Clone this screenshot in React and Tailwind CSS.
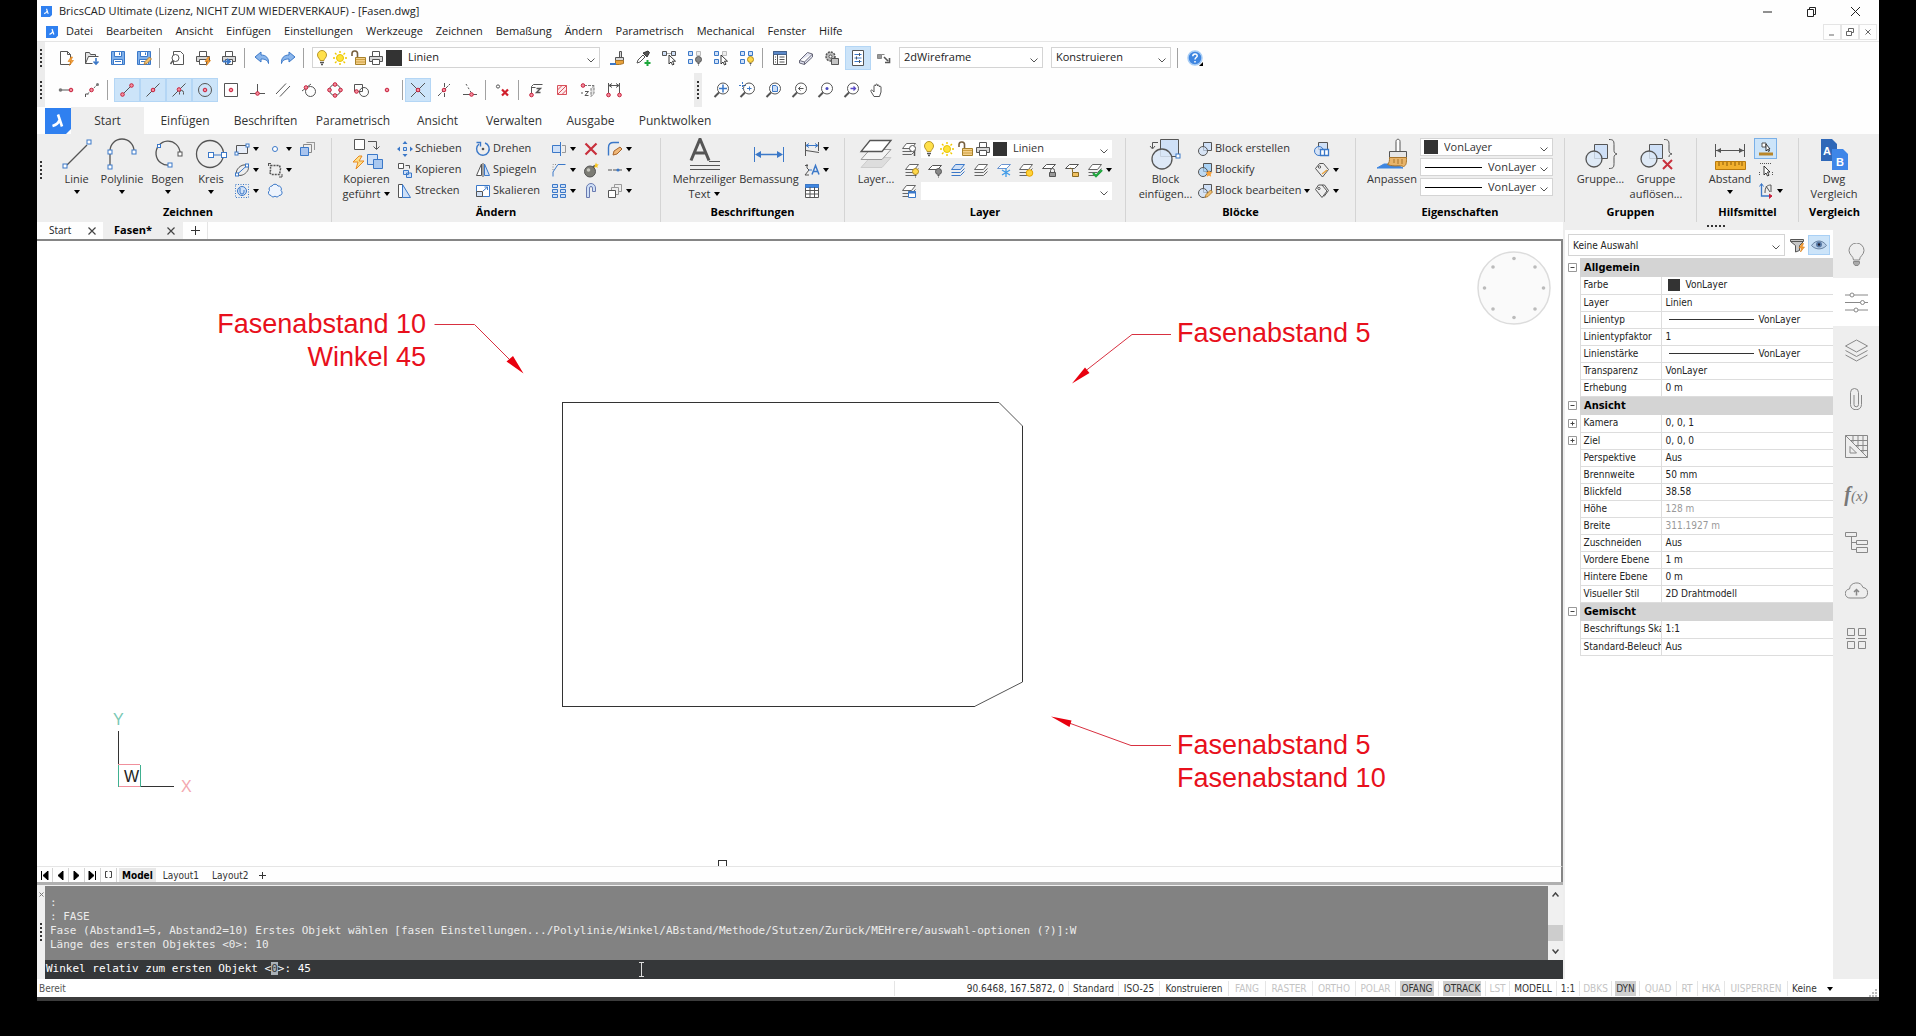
import React from "react";

const G = "#555";
const B = "#3b78c8";
const L = "#cfe0f7";
const R = "#c8203c";
const O = "#e9a23b";

const Dot = ({ x, y }) => <circle cx={x} cy={y} r="1.8" fill="#f3909f" stroke={R} />;
const Node = ({ x, y, c = B, s = 4 }) => <rect x={x - s / 2} y={y - s / 2} width={s} height={s} fill="#fff" stroke={c} />;
const Lens = ({ children }) => (
  <>
    <circle cx="10" cy="6.5" r="5.5" fill="#fff" stroke={G} />
    <path d="M6 10.500L1.500 15" stroke={G} strokeWidth="2" />
    {children}
  </>
);
const Sheet = ({ y = 2.5, f = "#fff", c = G }) => <path d={`M5.500 ${y}h9l-4 4h-9z`} fill={f} stroke={c} />;
const Stack = ({ f = "#fff", c = "#666" }) => (
  <>
    <path d="M1.500 13.500h9l4-4M1.500 10.500h9l4-4" fill="none" stroke={c} />
    <path d="M5.500 2.500h9l-4 5h-9z" fill={f} stroke={c} />
  </>
);
const Disk = () => (
  <>
    <path d="M1.500 1.500h13v13h-13z" fill="#7fb0ea" stroke={B} />
    <path d="M4.500 1.500h7v5h-7zM3.500 9.500h9v5h-9z" fill="#fff" stroke={B} />
    <path d="M9.500 2.500v2.500M5 11.500h6" stroke={B} />
  </>
);
const Pencil = () => <path d="M8 14.500l1-3 4.500-4.500 2 2-4.500 4.500z" fill="#f0c070" stroke="#a8742a" strokeWidth=".8" />;
const Flash = ({ x = 0, y = 0 }) => <path d={`M${12 + x} ${7 + y}l-3 4.500h2.500l-1 4 4-5h-2.500l1.500-3.500z`} fill="#f7a13a" stroke="#d97a10" strokeWidth=".6" />;
const Bulb = ({ x = 0, y = 0, f = "#ffe04a", c = "#b8962a" }) => (
  <g transform={`translate(${x} ${y})`}>
    <path d="M5 10.500c0-2-2.500-2.500-2.500-5.500a4.500 4.500 0 0 1 9 0c0 3-2.500 3.500-2.500 5.500z" fill={f} stroke={c} />
    <path d="M5 12.500h4M6 14.500h2" stroke={G} strokeWidth="1.400" />
  </g>
);
const Tiny = ({ f = "#ffd84a", c = "#b08a20" }) => (
  <>
    <circle cx="11.500" cy="9.500" r="3" fill={f} stroke={c} />
    <path d="M10.500 13.500h2M11 15h1" stroke={G} />
  </>
);
const Lock = ({ open }) => (
  <>
    <path d={open ? "M8.500 10V8a2 2 0 0 0-3-1.500" : "M9.500 10V8.500a2 2 0 0 1 4 0V10"} fill="none" stroke={open ? "#8a6a20" : G} />
    <path d="M8.500 10.500h6v4h-6z" fill={open ? "#f0c060" : "#999"} stroke={open ? "#8a6a20" : G} />
  </>
);
const Printer = () => (
  <>
    <path d="M4.500 6V1.500h7V6" fill="#fff" stroke={G} />
    <path d="M1.500 6.500h13v5h-13z" fill="#d8d8d8" stroke={G} />
    <path d="M4.500 9.500h7v5h-7z" fill="#fff" stroke={G} />
  </>
);
const Squares = ({ dim }) => (
  <>
    <path d="M1.500 1.500h4v4h-4zM1.500 9.500h4v4h-4z" fill={L} stroke={B} />
    <path d="M9.500 1.500h4v4h-4z" fill={dim ? "#eee" : L} stroke={dim ? "#bbb" : B} />
  </>
);
const Cursor = () => <path d="M8 5v9l2-2 1.500 3 1.500-.8-1.500-3h3z" fill="#fff" stroke="#222" strokeWidth=".9" />;
const CircSq = ({ f = L }) => (
  <>
    <path d="M6.500 1.500h8v8h-8z" fill={f} stroke={G} />
    <circle cx="6" cy="10" r="4.500" fill={f} fillOpacity=".7" stroke={G} />
  </>
);

const ICONS = {
  neu: <><path d="M2.500 1.500h7l3 3v10h-10z" fill="#fff" stroke={G} /><path d="M9.500 1.500v3h3" fill="none" stroke={G} /><Flash x={1} /></>,
  open: <><path d="M1.500 13.500v-11h4l1 2h5v2h-7l-3 7h7" fill="#e4e4e4" stroke={G} /><path d="M4.500 6.500h10" stroke={G} /><path d="M12 8v6M9.500 11.500L12 14l2.500-2.500" fill="none" stroke={B} strokeWidth="1.600" /></>,
  save: <Disk />,
  saveas: <><Disk /><Pencil /></>,
  preview: <><path d="M4.500 1.500h7l3 3v10h-10z" fill="#fff" stroke={G} /><circle cx="6.500" cy="8" r="3.500" fill="#fff" stroke={G} /><path d="M4 10.500L1.500 14" stroke={G} strokeWidth="1.500" /></>,
  printx: <><Printer /><Flash x={1} /></>,
  publish: <><Printer /><path d="M2 11.500h6M6 9l3 2.500-3 2.500" fill="none" stroke={B} strokeWidth="1.800" /></>,
  undo: <path d="M1 7l6-5v3c5 0 8 3 7.500 8.500-1-3.500-3.500-4.500-7.500-4.500v3z" fill="#8ab6ec" stroke={B} />,
  redo: <path d="M15 7l-6-5v3c-5 0-8 3-7.500 8.500 1-3.500 3.500-4.500 7.500-4.500v3z" fill="#8ab6ec" stroke={B} />,
  bulb: <Bulb x={1} />,
  sun: <><circle cx="8" cy="8" r="3.500" fill="#ffe23a" stroke="#e8c400" /><path d="M8 1v2M8 13v2M1 8h2M13 8h2M3 3l1.500 1.500M11.500 11.500L13 13M3 13l1.500-1.500M11.500 4.500L13 3" stroke="#f0c800" strokeWidth="1.400" /></>,
  unlock: <><path d="M7.500 8V4a2.700 2.700 0 0 0-5.500-.5v2.500" fill="none" stroke="#776040" strokeWidth="1.600" /><path d="M5.500 7.500h10v7h-10z" fill="#f3cf8a" stroke="#a8822a" /><path d="M6 9.500h9M6 12h9" stroke="#cfa040" /></>,
  printer: <Printer />,
  brush: <><path d="M10.500 1.500h2v6h-2zM6.500 7.500h8v3h-8z" fill="#d8d8d8" stroke={G} /><path d="M6.500 10.500h8v3l-4 1h-4z" fill={O} stroke="#a8742a" /><path d="M1 14h6" stroke={B} strokeWidth="2" /></>,
  picker: <><path d="M2 13l1-3 5-5 2 2-5 5z" fill="#fff" stroke={G} /><path d="M8 3l4 4 2.500-4.500-1.500-1.500z" fill="#555" stroke="#333" /><path d="M12.500 10v6M9.500 13h6" stroke="#1ea83c" strokeWidth="2" /></>,
  selhide: <><path d="M1.500 1.500h4v4h-4zM10.500 1.500h4v4h-4z" fill={L} stroke={G} /><path d="M5.500 3.500h5" stroke={G} strokeDasharray="1 1" /><Cursor /></>,
  selbulb: <><Squares dim /><Tiny f="#888" c={G} /></>,
  selcur: <><Squares dim /><Cursor /></>,
  sellit: <><Squares /><Tiny /></>,
  explorer: <><path d="M1.500 1.500h13v13h-13z" fill="#fff" stroke={G} /><path d="M1.500 1.500h13v3h-13z" fill="#5a88c8" stroke="#44628c" /><path d="M5.500 4.500v10M7.500 7h5M7.500 9.500h5M7.500 12h5M3 7h1M3 9.500h1M3 12h1" stroke={G} /></>,
  eraser: <path d="M1.500 10.500l8-8 5 1.500v3l-8 7.500-5-1.500zM1.500 10.500l5 1.500 8-8M6.500 12v2.500" fill="#e0e2f0" stroke="#667" />,
  gear: <><circle cx="6.500" cy="6.500" r="4.500" fill="#bbb" stroke={G} strokeWidth="1.500" strokeDasharray="2 1" /><circle cx="6.500" cy="6.500" r="1.500" fill="#fff" stroke={G} /><path d="M7.500 8.500h7v6h-7z" fill="#c4c4c4" stroke={G} /></>,
  settings: <><path d="M2.500.5h11v15h-11z" fill="#fff" stroke={G} /><path d="M4.500 4.500h7M4.500 8h7M4.500 11.500h7" stroke={B} /><path d="M9.500 3v3M6.500 6.500v3M9.500 10v3" stroke={G} /></>,
  swap: <><path d="M1.500 4.500h4v4h-4zM5.500 4.500h3" fill="#999" stroke="#888" /><path d="M8 7l4 4M13.500 8v4.500h-4.500" fill="none" stroke={G} strokeWidth="1.600" /></>,
  help: <><circle cx="8" cy="8" r="7" fill="#3f86e0" stroke="#a8cdf5" strokeWidth="1.500" /><path d="M5.800 6.200c0-3 4.400-3 4.400-.3 0 1.600-2.200 1.600-2.200 3.600M8 11v1.600" fill="none" stroke="#fff" strokeWidth="1.500" /><path d="M16 12v4h-4z" fill="#000" /></>,
  o1: <><path d="M4 8h8" stroke={G} /><circle cx="2.500" cy="8" r="1.800" fill="#777" /><Dot x={13} y={8} /></>,
  o2: <><path d="M3.500 12L13 3" stroke={G} strokeDasharray="2 1" /><path d="M1.500 15v-3h3" fill="none" stroke={G} /><circle cx="13.500" cy="2.500" r="1.500" fill="#777" /><Dot x={7.500} y={8} /></>,
  o3: <><path d="M3 13l10-10" stroke={G} /><Dot x={3.500} y={12.500} /><Dot x={12.500} y={3.500} /></>,
  o4: <><path d="M1.500 14.500l13-13" stroke={G} /><Dot x={8} y={8} /></>,
  o5: <><path d="M1.500 14.500l13-13M8.500 12.500v-2a2 2 0 0 1 4 0v2" fill="none" stroke={G} /><Dot x={8} y={7.500} /></>,
  o6: <><circle cx="8" cy="8" r="6.500" fill="none" stroke={G} /><Dot x={8} y={8} /></>,
  o7: <><path d="M1.500 1.500h13v13h-13z" fill="none" stroke={G} /><Dot x={8} y={8} /></>,
  o8: <><path d="M8.500 2v9M1 11.500h15" stroke={G} /><Dot x={8.500} y={11.500} /></>,
  o9: <path d="M1 12L11 1.500M5 14.500L15 4" stroke={G} />,
  o10: <><circle cx="9.500" cy="9.500" r="5" fill="none" stroke={G} /><path d="M1 9l9-7" stroke={G} /><Dot x={5} y={5.500} /></>,
  o11: <><circle cx="8" cy="8" r="5.500" fill="none" stroke={G} /><Dot x={8} y={2.500} /><Dot x={8} y={13.500} /><Dot x={2.500} y={8} /><Dot x={13.500} y={8} /></>,
  o12: <><path d="M1.500 2.500h8v7h-8z" fill="none" stroke={G} /><circle cx="11" cy="10" r="4.500" fill="none" stroke={G} /><Dot x={3.500} y={9.500} /></>,
  o13: <Dot x={8} y={8} />,
  o14: <><path d="M1 1l14 14M15 1L1 15" stroke={G} /><Dot x={8} y={8} /></>,
  o15: <><path d="M2 14L14 2M8.500 1v14" stroke={G} strokeDasharray="4 1" /><Dot x={8} y={8} /></>,
  o16: <><path d="M1 12.500h14" stroke={G} /><path d="M4 2l6 10" stroke={G} strokeDasharray="2 2" /><Dot x={9.500} y={12.500} /></>,
  o17: <><circle cx="3" cy="4.500" r="1.600" fill="none" stroke={G} /><path d="M7 7.500l6 6M13 7.500l-6 6" stroke="#d0202c" strokeWidth="2.200" /></>,
  o18: <><path d="M3.500 12V4.500l2-2h9M3.500 5.500h4" fill="none" stroke={G} /><path d="M8.500 6.500h4l-4 4h4" fill="none" stroke={G} strokeWidth="1.400" /><Dot x={3.500} y={13} /></>,
  o19: <path d="M3.500 3.500h9v9h-9zM3.500 8l4.500-4.500M3.500 12.500l9-9M8 12.500L12.500 8" fill="#fdeaec" stroke="#d8505a" />,
  o20: <><path d="M4 3.500h10v8l-3 3v-8l3-3" fill="#e4e4e4" stroke="#777" strokeDasharray="3 1" /><path d="M1 11h2M5 9.500h3.500l-3.500 4h3.500" fill="none" stroke={G} /><Dot x={3} y={3.500} /></>,
  o21: <><path d="M2.500 1v10M13.500 1v10M3 3.500h10" stroke={G} /><path d="M6 1.500l-3 2 3 2M10 1.500l3 2-3 2" fill="none" stroke={G} /><Dot x={2.500} y={13} /><Dot x={13.500} y={13} /></>,
  z1: <Lens><path d="M10 2.500v8M6 6.500h8" stroke={B} strokeWidth="1.500" /></Lens>,
  z2: <Lens><path d="M0 3.500h7M3.500 0v7" stroke={B} strokeDasharray="2 1" /><path d="M8 6.500h4.500M10.500 4.500v4" stroke={B} /></Lens>,
  z3: <Lens><path d="M7.500 3.500h3.500l1.500 1.500v4.500h-5z" fill={L} stroke={B} /></Lens>,
  z4: <Lens><path d="M7.500 6.500h5M9.500 4.500l-2 2 2 2" fill="none" stroke={G} /></Lens>,
  z5: <Lens><circle cx="10" cy="6.500" r="1.500" fill="#4a4ac0" /></Lens>,
  z6: <Lens><path d="M7.500 6.500h5M10.500 4.500l2 2-2 2" fill="none" stroke="#5a4ac8" strokeWidth="1.300" /></Lens>,
  z7: <path d="M5 14.500L2 9.500c-.8-1.500.8-2 1.800-.8L5 10V4c0-1.200 1.600-1.200 1.700 0V3c0-1.200 1.800-1.200 1.800 0v1c0-1.200 1.800-1.200 1.800 0v1c0-1 1.700-1 1.700 0v5l-1.500 4.500z" fill="#fff" stroke={G} />,
  rect: <><path d="M2.500 4.500h11v8h-11z" fill="#e8eef8" stroke={G} /><Node x={2.500} y={12.500} s={3} /><Node x={13.500} y={4.500} s={3} /></>,
  ell: <><path d="M3 12.500c-3-4 5-12 10-9s-4 13-10 9z" fill="none" stroke={G} /><path d="M3 12.500l10-9" stroke={B} /><Node x={3} y={12.500} s={3} /><Node x={13} y={3.500} s={3} /></>,
  hatch: <><path d="M1.500 1.500h13v13h-13z" fill="none" stroke={B} strokeDasharray="1 1.500" /><circle cx="8" cy="8" r="4.500" fill={L} stroke={B} /><path d="M6 5v4a2 2 0 0 0 4 0V7" fill="none" stroke={B} /></>,
  pt: <circle cx="8" cy="8" r="2.500" fill="#fff" stroke={B} />,
  bound: <><path d="M3.500 3.500h9l1 3-1 6h-8l-2-2 1-2z" fill="none" stroke={G} strokeDasharray="2 1" strokeWidth="1.500" /><path d="M1 1.500h3M1.500 1v3M15 12v3h-3" fill="none" stroke={G} /></>,
  cloud: <path d="M4 12.500A2.800 2.800 0 0 1 2.500 7.500A3 3 0 0 1 5 3A3.400 3.400 0 0 1 11 3A3 3 0 0 1 14 7.500A2.800 2.800 0 0 1 12 12.500A2.300 2.300 0 0 1 8 13A2.300 2.300 0 0 1 4 12.500z" fill="#eef4fd" stroke={B} />,
  copy3: <><path d="M7.500 1.500h8M15.500 1v8" stroke="#999" /><path d="M4.500 3.500h8v8h-8z" fill="#eee" stroke="#888" /><path d="M1.500 6.500h8v8h-8z" fill="#a9c4ee" stroke={B} /></>,
  move: <><path d="M6.500 6.500h3v3h-3z" fill={L} stroke={B} /><path d="M8 0l2.500 3h-5zM8 16l2.500-3h-5zM0 8l3-2.500v5zM16 8l-3-2.500v5z" fill={B} /></>,
  kop: <><path d="M1.500 1.500h5v5h-5z" fill="#fff" stroke={G} /><path d="M8.500 3.500h4v3" fill="none" stroke={G} /><path d="M6.500 8.500h5v4h-5zM9.500 11h5v4.500h-5z" fill={L} stroke={B} /></>,
  strecken: <><path d="M1.500 14.500v-13h4v13z" fill="#fff" stroke={G} /><path d="M5.500 1.500l8 13h-8z" fill={L} stroke={B} /></>,
  drehen: <><path d="M4 3a6.300 6.300 0 1 0 6-1" fill="none" stroke={B} strokeWidth="1.400" /><path d="M1.500 1.500h4v4" fill="none" stroke={B} strokeWidth="1.400" /><circle cx="8" cy="8" r="1.300" fill={G} /></>,
  spiegeln: <><path d="M6.500 2v11.500h-5zM8 1v14" fill="#fff" stroke={G} /><path d="M9.500 2v11.500h5z" fill={L} stroke={B} /></>,
  skal: <><path d="M1.500 2.500h13v11h-13z" fill="#fff" stroke={B} /><path d="M1.500 8.500h6v5h-6z" fill={L} stroke={G} /><path d="M8 8l4.500-4M9.500 4h3v3" fill="none" stroke={B} /></>,
  trim: <><path d="M1.500 4.500h8v7h-8z" fill={L} stroke={B} /><path d="M9.500 1v14" stroke={B} /><path d="M11 4.500h3.500v7H11" fill="none" stroke="#999" /></>,
  fase: <><path d="M2 14.500V10l5-7.500h7.500" fill="none" stroke={B} /><path d="M2 8V2.500h4" fill="none" stroke="#888" strokeDasharray="1 1.500" /></>,
  array: <path d="M1.500 1.500h5v3h-5zM9.500 1.500h5v3h-5zM1.500 6.500h5v3h-5zM9.500 6.500h5v3h-5zM1.500 11.500h5v3h-5zM9.500 11.500h5v3h-5z" fill={L} stroke={B} />,
  del: <path d="M2.500 2.500l11 11M13.500 2.500l-11 11" stroke="#c8303c" strokeWidth="2.200" />,
  bomb: <><circle cx="7" cy="9.500" r="5.500" fill="#7b7b74" stroke={G} /><circle cx="5.500" cy="8" r="1.800" fill="#c8c8c0" /><path d="M10 5.500l2-2" stroke={G} strokeWidth="2" /><path d="M13 .5l.8 1.700 2 .3-1.500 1.400.4 2L13 5l-1.800 1 .4-2z" fill="#f7c51e" /></>,
  clip: <path d="M3.500 14.500V5a4.500 4.500 0 0 1 9 0v3.500h-3V5a1.500 1.500 0 0 0-3 0v9.500z" fill={L} stroke="#6a7ab0" />,
  edit: <><path d="M1.500 14.500v-8c0-3 2-5 5-5h5.500" fill="none" stroke={B} strokeWidth="1.400" /><path d="M6 14l1-4 6-4 2 2-5 5z" fill="#f0b878" stroke="#a8642a" /></>,
  join: <><path d="M1 8h4M6 8h4" stroke={G} /><path d="M10 8h5" stroke={G} /><circle cx="11" cy="8" r="1.600" fill={B} /></>,
  order: <><path d="M7.500 1.500h7v7h-7z" fill="#eee" stroke="#999" /><path d="M4.500 4.500h7v7h-7z" fill="#eee" stroke="#999" /><path d="M1.500 7.500h7v7h-7z" fill="#fff" stroke={G} /></>,
  dim1: <><path d="M1.500 1v14M14.500 1v9" stroke={G} /><path d="M2 4.500h12M5 2.500l-3 2 3 2M11 2.500l3 2-3 2" fill="none" stroke={B} /><path d="M2 9.500l13 2" stroke={G} /></>,
  dim2: <><path d="M1 3.500h3M3 2v4l2 2-4 5M1 13h4" fill="none" stroke={G} /><path d="M5 8h3" stroke={B} /><path d="M8 12.500L11.500 3.500 15 12.500M9.500 9.500h4.500" fill="none" stroke={B} strokeWidth="1.500" /></>,
  table: <><path d="M1.500 1.500h13v13h-13z" fill="#fff" stroke={G} /><path d="M1.500 1.500h13v3h-13z" fill="#3f86e0" stroke={B} /><path d="M1.500 7.500h13M1.500 11h13M6 4v10.500M10.500 4v10.500" stroke={G} /></>,
  lay0: <><Stack /><circle cx="11.500" cy="7.500" r="3" fill="#fff" stroke={G} /><path d="M13.500 10v5" stroke={G} strokeWidth="1.500" /></>,
  lay1: <><Stack /><Tiny /></>,
  lay2: <><Sheet y={3.500} /><Tiny f="#888" c={G} /></>,
  lay3: <Stack f={L} c={B} />,
  lay4: <Stack />,
  lay5: <><Sheet y={2.500} c="#6a94d0" f="#fff" /><path d="M10 6v9M6 8l8 5M14 8l-8 5" stroke="#3f9be8" strokeWidth="1.300" /></>,
  lay6: <><Stack /><circle cx="11.500" cy="11" r="3.300" fill="#ffd23a" stroke="#e5a400" /></>,
  lay7: <><Sheet y={2.500} /><Lock /></>,
  lay8: <><Sheet y={2.500} /><Lock open /></>,
  lay9: <><Stack /><path d="M6 11l3 3 6-6" fill="none" stroke="#22a840" strokeWidth="2.400" /></>,
  lay10: <><Stack /><path d="M7.500 8.500h7v6h-7z" fill="#fff" stroke={B} /><path d="M7 9.500h8" stroke={B} strokeWidth="2" /></>,
  blk1: <CircSq />,
  blk2: <><CircSq f="#a9d2f5" /><path d="M12 8l1 2 2.500.4-1.800 1.700.4 2.600L12 13.500l-2.200 1.200.4-2.600L8.500 10.400 11 10z" fill="#f7a13a" /></>,
  blk3: <><CircSq /><Pencil /></>,
  blk4: <><path d="M4.500 1.500h9v7h-9z" fill={L} stroke={G} /><circle cx="5" cy="10" r="4.500" fill={L} fillOpacity=".8" stroke={B} /><path d="M6.500 8.500h8v6h-8zM10.500 8.500v6" fill="#fff" stroke={B} strokeWidth="1.300" /></>,
  tag: <><path d="M1.500 6.500l4-5h4l5 6-6 7.500z" fill="#eee" stroke={G} /><circle cx="5.500" cy="5" r="1.200" fill="#fff" stroke={G} /><path d="M8 12l5-4" stroke={O} strokeWidth="1.500" /></>,
  tag2: <><path d="M1.500 6.500l3-4.500h3.500l5 6-5 6.500z" fill="#eee" stroke={G} /><path d="M8 2h2.500l4 5.500-4.500 6" fill="none" stroke={G} /><circle cx="5" cy="5.500" r="1.100" fill="#fff" stroke={G} /></>,
  hm1: <><path d="M1 13h14" stroke="#b8862a" strokeWidth="3" /><path d="M4 2h4v4h-4z" fill="#fff" stroke={G} /><path d="M8 3v7l1.500-1.500 1 2 1-.5-1-2H12z" fill="#fff" stroke="#222" strokeWidth=".9" /></>,
  hm2: <><path d="M2 1.500h12M1.500 10v4M14.500 10v4" stroke={G} strokeDasharray="1 1" /><path d="M6 4v9l2-2 1.500 3 1.500-.8L9.500 10H12z" fill="#fff" stroke="#222" strokeWidth=".9" /></>,
  hm3: <><path d="M3.500 1v12h9" fill="none" stroke={B} strokeWidth="1.300" /><path d="M1.500 3.500l2-3 2 3" fill="none" stroke={B} /><path d="M7 10c0-6 2-8 6-8v7M8 3l4 6" fill="none" stroke={G} /><path d="M11 11l3 2-3 2.500" fill={R} stroke={R} /></>,
  filter: <><path d="M1.500 2.500h13v2l-4 4v5l-4 1.500V8.500l-5-4z" fill="#c8c8c8" stroke={G} /><path d="M2 4.500h12" stroke={G} /><Flash x={1} y={-.5} /></>,
  eye: <><path d="M.5 8.500c4-6 11-6 15 0-4 4.500-11 4.500-15 0z" fill="#b8cfe8" stroke="#6a84a4" /><circle cx="8" cy="7.500" r="3" fill="#5a7ca8" /><circle cx="8" cy="7.500" r="1.200" fill="#223" /></>,
};

const BIG = {
  linie: <><path d="M6 27L26 7" stroke={G} strokeWidth="1.300" /><Node x={4} y={28} /><Node x={28} y={4} /></>,
  poly: <><path d="M4 28V13a12 12 0 0 1 24 0" fill="none" stroke={G} strokeWidth="1.300" /><Node x={4} y={29} /><Node x={4} y={14} /><Node x={28} y={14} /></>,
  bogen: <><path d="M28 15A12 12 0 1 0 18 27" fill="none" stroke={G} strokeWidth="1.300" /><Node x={7} y={8} s={3} /><Node x={28} y={16} c={G} /><Node x={18} y={27} /></>,
  kreis: <><circle cx="15" cy="16" r="13.500" fill="none" stroke={G} strokeWidth="1.300" /><path d="M16 17h12" stroke={B} /><Node x={16} y={17} s={5} /><Node x={29} y={17} s={5} /></>,
  kopg: <><path d="M3.500 1.500h10v10h-10z" fill="#fff" stroke={G} /><path d="M17 3.500h8.500V11M22.500 8.500l3 3 3-3" fill="none" stroke={G} /><path d="M8 18l-6 6h5l-2 7 8-8H8l3-5z" fill="#fde08a" stroke="#e98a20" /><path d="M16.500 16.500h10v10h-10z" fill={L} stroke={B} /><path d="M22.500 21.500h9v9h-9z" fill="#a9c8f0" stroke={B} /></>,
  dim: <><path d="M1.500 9v15M30.500 9v15" stroke={B} /><path d="M4 16.500h24" stroke={B} strokeWidth="1.500" /><path d="M2 16.500l6-3.500v7zM30 16.500l-6-3.500v7z" fill={B} /></>,
  layer: <><path d="M10 19.500h21l-9 10H1z" fill="#ddd" stroke="#ccc" /><path d="M10 11.500h21l-9 10H1z" fill="#f4f4f4" stroke="#999" /><path d="M10 2.500h21l-9 11H1z" fill="#fff" stroke={G} strokeWidth="1.300" /></>,
  block: <><path d="M10.500 1.500h18v17h-18z" fill="#cfe0f7" stroke={G} /><circle cx="12" cy="21" r="10" fill="#dbe8f8" fillOpacity=".85" stroke={G} strokeWidth="1.300" /><path d="M2.500 10V4.500H8M0 8l2.500 3L5 8" fill="none" stroke={G} /><Node x={28} y={18} /></>,
  pinsel: <><path d="M20 13V3.500c0-3 4-3 4 0V13" fill="#fff" stroke={G} /><path d="M13.500 13.500h17v6h-17z" fill="#e6e6e6" stroke={G} /><path d="M1 30h26l-8-4H8z" fill="#3f86e0" stroke="#3f86e0" /><path d="M13.500 19.500h17c0 5 0 8-3 9-4-2-8 1-16-2 2-2 2-4 2-7z" fill="#e8b46a" stroke="#a8742a" /><path d="M18 21v4M22 21v5M26 21v5" stroke="#a8742a" /></>,
  gruppe: <><path d="M9.500 6.500h13v14h-13z" fill="#cfe0f7" stroke={G} /><circle cx="9" cy="21" r="8" fill="#dbe8f8" fillOpacity=".8" stroke={G} strokeWidth="1.300" /><path d="M24 1.500c4 0 5 1 5 5v6c0 2 1 3 3 3.500-2 .5-3 1.500-3 3.500v6c0 4-1 5-5 5" fill="none" stroke={G} /></>,
  gruppex: <><path d="M9.500 6.500h13v14h-13z" fill="#cfe0f7" stroke={G} /><circle cx="9" cy="21" r="8" fill="#dbe8f8" fillOpacity=".8" stroke={G} strokeWidth="1.300" /><path d="M24 1.500c4 0 5 1 5 5v6c0 2 1 3 3 3.500-2 0-3 1-3 3" fill="none" stroke={G} /><path d="M23 22l9 9M32 22l-9 9" stroke="#c8303c" strokeWidth="2" /></>,
  abstand: <><path d="M1.500 6v13M30.500 6v13M2 12.500h28" stroke={G} /><path d="M2 12.500l5-2.500v5zM30 12.500l-5-2.500v5z" fill={G} /><path d="M1.500 23.500h30v8h-30z" fill="#f2b02e" stroke="#b87a10" /><path d="M5 24v4M9 24v3M13 24v4M17 24v3M21 24v4M25 24v3M28 24v4" stroke="#8a5a08" /></>,
};

const Ic = ({ n, s = "size-4" }) => <svg viewBox="0 0 16 16" fill="none" className={`${s} shrink-0`} aria-hidden="true">{ICONS[n]}</svg>;
const Big = ({ n }) => <svg viewBox="0 0 32 32" fill="none" className="size-8 shrink-0 overflow-visible" aria-hidden="true">{BIG[n]}</svg>;
const Tri = ({ className = "" }) => <svg viewBox="0 0 6 4" className={`h-1 w-1.5 shrink-0 ${className}`} aria-hidden="true"><path d="M0 0h6L3 4z" fill="#000" /></svg>;
const Chevron = () => <svg viewBox="0 0 8 5" className="pointer-events-none absolute right-1 top-1/2 h-[5px] w-2" aria-hidden="true"><path d="M.5.5L4 4 7.500.5" fill="none" stroke="#555" /></svg>;
const Logo = ({ className }) => (
  <svg viewBox="0 0 26 26" className={`shrink-0 ${className}`} aria-hidden="true">
    <path d="M0 0h26v21l-5 5H0z" fill="#2f80f0" />
    <path d="M13 6.500l4 12M14.500 12c-1 3-3.500 5-7 6" fill="none" stroke="#fff" strokeWidth="2.600" />
  </svg>
);
const Dots = ({ vertical, className = "" }) => (
  <svg viewBox={vertical ? "0 0 2 18" : "0 0 18 2"} className={`${vertical ? "h-[18px] w-0.5" : "h-0.5 w-[18px]"} shrink-0 ${className}`} aria-hidden="true">
    <path d={vertical ? "M1 0v18" : "M0 1h18"} stroke="#333" strokeWidth="2" strokeDasharray="2 2" />
  </svg>
);
const Divider = ({ className = "mx-1" }) => <span className={`h-5 w-px bg-neutral-400 ${className}`} />;

const ToolButton = ({ n, label, on }) => (
  <button aria-label={label} aria-pressed={on} className={`flex h-6 w-[26px] shrink-0 items-center justify-center ${on ? "bg-[#cce4f9] outline outline-1 -outline-offset-1 outline-[#b4d6f5]" : ""}`}>
    <Ic n={n} />
  </button>
);

const Combo = ({ label, value, options = [], className = "", children }) => (
  <div className={`relative flex items-center gap-0.5 border border-neutral-300 bg-white ${className}`}>
    {children}
    <select aria-label={label} defaultValue={value} className="h-full min-w-0 flex-1 appearance-none bg-transparent pr-3 pl-1 outline-none">
      {[value, ...options].map((o) => <option key={o}>{o}</option>)}
    </select>
    <Chevron />
  </div>
);

const MENU = ["Datei", "Bearbeiten", "Ansicht", "Einfügen", "Einstellungen", "Werkzeuge", "Zeichnen", "Bemaßung", "Ändern", "Parametrisch", "Mechanical", "Fenster", "Hilfe"];

function TitleBar() {
  return (
    <header className="flex h-[22px] items-center pl-1">
      <Logo className="size-[11px]" />
      <h1 className="ml-[7px] flex-1 text-[11px]">BricsCAD Ultimate (Lizenz, NICHT ZUM WIEDERVERKAUF) - [Fasen.dwg]</h1>
      <div className="flex pr-0.5">
        {[["Minimieren", "M1 6h9"], ["Wiederherstellen", "M1.500 3.500h6v7h-6zM3.500 3.500v-2h6v7h-2"], ["Schließen", "M1 1l9 9M10 1l-9 9"]].map(([l, d]) => (
          <button key={l} aria-label={l} className="flex h-5 w-11 items-center justify-center">
            <svg viewBox="0 0 11 11" className="size-[11px]"><path d={d} fill="none" stroke="#222" /></svg>
          </button>
        ))}
      </div>
    </header>
  );
}

function MenuBar() {
  return (
    <nav className="flex h-5 items-center border-b border-neutral-200 pl-[9px] text-[11px]">
      <Logo className="size-3" />
      <div className="ml-2 flex flex-1 gap-[13px]">
        {MENU.map((m) => <button key={m}>{m}</button>)}
      </div>
      <div className="flex pr-0.5">
        {[["Dokument minimieren", "M1 7h5"], ["Dokument wiederherstellen", "M.5 3.500h5v4h-5zM2.500 3v-2.500h5v4h-2"], ["Dokument schließen", "M1.500 1.500l5 5M6.500 1.500l-5 5"]].map(([l, d]) => (
          <button key={l} aria-label={l} className="flex h-4 w-[18px] items-center justify-center border border-neutral-200">
            <svg viewBox="0 0 8 8" className="size-2"><path d={d} fill="none" stroke="#666" /></svg>
          </button>
        ))}
      </div>
    </nav>
  );
}

const Grip = ({ className = "" }) => <span className={`flex w-2 shrink-0 items-center justify-center self-stretch bg-[#ececec] ${className}`}><Dots vertical /></span>;

function Toolbars() {
  return (
    <>
      <div className="flex h-[31px] items-center text-[11px]">
        <Grip />
        <div className="ml-2 flex items-center">
          <ToolButton n="neu" label="Neu" /><ToolButton n="open" label="Öffnen" /><ToolButton n="save" label="Speichern" /><ToolButton n="saveas" label="Speichern unter" />
          <Divider className="mr-1 ml-0.5" />
          <ToolButton n="preview" label="Druckvorschau" /><ToolButton n="printx" label="Drucken" /><ToolButton n="publish" label="Publizieren" />
          <Divider className="mr-1 ml-0.5" />
          <ToolButton n="undo" label="Zurück" /><ToolButton n="redo" label="Wiederherstellen" />
          <Divider className="mr-2 ml-0.5" />
          <Combo label="Aktueller Layer" value="Linien" className="h-[21px] w-[288px] pl-px">
            <Ic n="bulb" /><Ic n="sun" /><Ic n="unlock" /><Ic n="printer" />
            <span className="size-4 bg-[#333]" />
          </Combo>
          <span className="w-1" />
          <ToolButton n="brush" label="Eigenschaften anpassen" /><ToolButton n="picker" label="Pipette" /><ToolButton n="selhide" label="Auswählen" /><ToolButton n="selbulb" label="Ausblenden" /><ToolButton n="selcur" label="Isolieren" /><ToolButton n="sellit" label="Einblenden" />
          <Divider className="mr-1 ml-0.5" />
          <ToolButton n="explorer" label="Zeichnungs-Explorer" /><ToolButton n="eraser" label="Bereinigen" /><ToolButton n="gear" label="Anpassen" /><ToolButton n="settings" label="Einstellungen" on /><ToolButton n="swap" label="Umschalten" />
          <Combo label="Visueller Stil" value="2dWireframe" className="h-[21px] w-36 ml-0.5" />
          <Combo label="Arbeitsbereich" value="Konstruieren" className="ml-2 h-[21px] w-[120px]" />
          <Divider className="ml-1.5 mr-1" />
          <ToolButton n="help" label="Hilfe" />
        </div>
      </div>
      <div className="flex h-[34px] items-center">
        <Grip />
        <div className="ml-2 flex items-center">
          <ToolButton n="o1" label="Temporärer Spurpunkt" /><ToolButton n="o2" label="Von" />
          <Divider className="ml-0.5 mr-1.5" />
          <ToolButton n="o3" label="Endpunkt" on /><ToolButton n="o4" label="Mittelpunkt" on /><ToolButton n="o5" label="Nächster" on /><ToolButton n="o6" label="Zentrum" on />
          <ToolButton n="o7" label="Geometrisches Zentrum" /><ToolButton n="o8" label="Lot" /><ToolButton n="o9" label="Parallel" /><ToolButton n="o10" label="Tangente" /><ToolButton n="o11" label="Quadrant" /><ToolButton n="o12" label="Basispunkt" /><ToolButton n="o13" label="Punkt" />
          <Divider className="mx-0.5" />
          <ToolButton n="o14" label="Schnittpunkt" on /><ToolButton n="o15" label="Angenommener Schnittpunkt" /><ToolButton n="o16" label="Verlängerung" />
          <Divider className="ml-0.5 mr-1" />
          <ToolButton n="o17" label="Fang löschen" />
          <Divider className="ml-0.5 mr-1" />
          <ToolButton n="o18" label="Z ignorieren" /><ToolButton n="o19" label="Schraffur" /><ToolButton n="o20" label="Negatives Z" /><ToolButton n="o21" label="Abstände" />
        </div>
        <Grip className="ml-[67px]" />
        <div className="ml-1.5 flex items-center">
          {["Zoom Grenzen", "Zoom Fenster", "Zoom Vorher", "Zoom Zurück", "Zoom Mitte", "Zoom Vor", "Pan"].map((l, i) => <ToolButton key={l} n={["z1", "z2", "z3", "z4", "z5", "z6", "z7"][i]} label={l} />)}
        </div>
      </div>
    </>
  );
}

const TABS = [["Start", "w-[73px]"], ["Einfügen", "w-[82px]"], ["Beschriften", "w-[79px]"], ["Parametrisch", "w-24"], ["Ansicht", "w-[73px]"], ["Verwalten", "w-20"], ["Ausgabe", "w-[73px]"], ["Punktwolken", "w-24"]];

const BigButton = ({ icon, lines, arrow, w, children }) => (
  <button className={`flex shrink-0 flex-col items-center leading-[15px] ${w}`}>
    {children || <Big n={icon} />}
    <span className="mt-px">{lines[0]}</span>
    {lines[1] ? <span className="flex items-center gap-1">{lines[1]}{arrow && <Tri />}</span> : arrow && <Tri className="mt-1" />}
  </button>
);
const Cell = ({ n, label, text, arrow }) => (
  <button aria-label={label} className="flex h-[21px] items-center gap-[3px] whitespace-nowrap">
    <Ic n={n} />{text && <span className="-ml-px">{text}</span>}{arrow && <Tri />}
  </button>
);
const Col = ({ w, children }) => <div className={`flex shrink-0 flex-col ${w}`}>{children}</div>;
const Panel = ({ title, w, pad, children }) => (
  <section className={`flex shrink-0 flex-col border-r border-neutral-300 ${w}`}>
    <div className={`flex h-[65px] items-start ${pad}`}>{children}</div>
    <h2 className="pt-px text-center text-[11px] leading-4 font-bold text-black">{title}</h2>
  </section>
);

function Ribbon() {
  return (
    <div className="text-[11px] text-[#333]">
      <div className="flex h-[27px] items-stretch pl-2 text-xs" role="tablist">
        <button aria-label="BricsCAD Menü"><Logo className="size-[26px]" /></button>
        {TABS.map(([t, w], i) => (
          <button key={t} role="tab" aria-selected={i === 0} className={`${w} ${i === 0 ? "bg-[#eee]" : ""}`}>{t}</button>
        ))}
      </div>
      <div className="flex h-[88px] bg-[#eee] pt-1">
        <span className="flex w-2 items-center justify-center pb-5"><Dots vertical /></span>
        <Panel title="Zeichnen" w="w-[287px]" pad="pl-[9px]">
          <BigButton icon="linie" lines={["Linie"]} arrow w="w-[45px]" />
          <BigButton icon="poly" lines={["Polylinie"]} arrow w="w-[46px]" />
          <BigButton icon="bogen" lines={["Bogen"]} arrow w="w-[45px]" />
          <BigButton icon="kreis" lines={["Kreis"]} arrow w="w-[42px]" />
          <span className="w-0.5" />
          <Col w="w-[33px]"><Cell n="rect" label="Rechteck" arrow /><Cell n="ell" label="Ellipse" arrow /><Cell n="hatch" label="Schraffur" arrow /></Col>
          <Col w="w-8"><Cell n="pt" label="Punkt" arrow /><Cell n="bound" label="Umgrenzung" arrow /><Cell n="cloud" label="Revisionswolke" /></Col>
          <Col w="w-5"><Cell n="copy3" label="Region" /></Col>
        </Panel>
        <Panel title="Ändern" w="w-[329px]" pad="pl-1">
          <BigButton icon="kopg" lines={["Kopieren", "geführt"]} arrow w="w-[61px]" />
          <Col w="w-[78px]"><Cell n="move" text="Schieben" /><Cell n="kop" text="Kopieren" /><Cell n="strecken" text="Strecken" /></Col>
          <Col w="w-[76px]"><Cell n="drehen" text="Drehen" /><Cell n="spiegeln" text="Spiegeln" /><Cell n="skal" text="Skalieren" /></Col>
          <Col w="w-8"><Cell n="trim" label="Stutzen" arrow /><Cell n="fase" label="Fase" arrow /><Cell n="array" label="Reihe" arrow /></Col>
          <Col w="w-6"><Cell n="del" label="Löschen" /><Cell n="bomb" label="Ursprung" /><Cell n="clip" label="Versatz" /></Col>
          <Col w="w-8"><Cell n="edit" label="Bearbeiten" arrow /><Cell n="join" label="Verbinden" arrow /><Cell n="order" label="Zeichenreihenfolge" arrow /></Col>
        </Panel>
        <Panel title="Beschriftungen" w="w-[184px]" pad="pl-[10px]">
          <BigButton lines={["Mehrzeiliger", "Text"]} arrow w="w-[67px]">
            <svg viewBox="0 0 32 32" className="size-8" aria-hidden="true"><path d="M2 22.500L11 1l9 21.500M5.500 15h11" fill="none" stroke="#555" strokeWidth="3" /><path d="M20 23.500h11M1 27.500h30M1 31.500h30" stroke="#555" /></svg>
          </BigButton>
          <BigButton icon="dim" lines={["Bemassung"]} w="w-[62px]" />
          <span className="w-1" />
          <Col w="w-8"><Cell n="dim1" label="Bemassungen" arrow /><Cell n="dim2" label="Führung" arrow /><Cell n="table" label="Tabelle" /></Col>
        </Panel>
        <Panel title="Layer" w="w-[281px]" pad="pl-1.5">
          <BigButton icon="layer" lines={["Layer..."]} w="w-[50px]" />
          <div className="flex w-[211px] flex-col">
            <div className="flex h-[21px] items-center gap-1">
              <Ic n="lay0" />
              <Combo label="Layer" value="Linien" className="h-[18px] flex-1 border-none"><Ic n="bulb" /><Ic n="sun" /><Ic n="unlock" /><Ic n="printer" /><span className="size-3.5 bg-[#333]" /></Combo>
            </div>
            <div className="flex h-[21px] items-center justify-between pl-[3px]">
              {["lay1", "lay2", "lay3", "lay4", "lay5", "lay6", "lay7", "lay8", "lay9"].map((n, i) => (
                <button key={n} aria-label={`Layerwerkzeug ${i + 1}`}><Ic n={n} /></button>
              ))}
              <Tri className="-ml-1" />
            </div>
            <div className="flex h-[21px] items-center gap-1"><Ic n="lay10" /><Combo label="Layerstatus" value="" className="h-[18px] flex-1 border-none" /></div>
          </div>
        </Panel>
        <Panel title="Blöcke" w="w-[230px]" pad="pl-2">
          <BigButton icon="block" lines={["Block", "einfügen..."]} w="w-[63px]" />
          <Col w="w-[117px]"><Cell n="blk1" text="Block erstellen" /><Cell n="blk2" text="Blockify" /><Cell n="blk3" text="Block bearbeiten" arrow /></Col>
          <Col w="w-8"><Cell n="blk4" label="Blockreferenz" /><Cell n="tag" label="Attribut bearbeiten" arrow /><Cell n="tag2" label="Attribute" arrow /></Col>
        </Panel>
        <Panel title="Eigenschaften" w="w-[209px]" pad="pl-2">
          <BigButton icon="pinsel" lines={["Anpassen"]} w="w-14" />
          <div className="flex w-[133px] flex-col gap-0.5">
            <Combo label="Farbe" value="VonLayer" className="h-[18px] border-neutral-200 pl-[3px]"><span className="size-3.5 bg-[#333]" /></Combo>
            <Combo label="Linientyp" value="VonLayer" className="h-[18px] border-neutral-200 pl-1"><span className="h-px w-[57px] bg-black" /></Combo>
            <Combo label="Linienstärke" value="VonLayer" className="h-[18px] border-neutral-200 pl-1"><span className="h-px w-[57px] bg-black" /></Combo>
          </div>
        </Panel>
        <Panel title="Gruppen" w="w-[132px]" pad="pl-2">
          <BigButton icon="gruppe" lines={["Gruppe..."]} w="w-[55px]" />
          <BigButton icon="gruppex" lines={["Gruppe", "auflösen..."]} w="w-14" />
        </Panel>
        <Panel title="Hilfsmittel" w="w-[102px]" pad="pl-[9px]">
          <BigButton icon="abstand" lines={["Abstand"]} arrow w="w-12" />
          <Col w="w-9">
            <button aria-label="Schnellauswahl" aria-pressed="true" className="flex h-[21px] w-[23px] items-center justify-center border border-[#7ab0e8] bg-[#cce4f9]"><Ic n="hm1" /></button>
            <span className="flex flex-col pl-1"><Cell n="hm2" label="Auswahlrahmen" /><Cell n="hm3" label="BKS" arrow /></span>
          </Col>
        </Panel>
        <section className="flex flex-1 flex-col">
          <div className="flex h-[65px] items-start pl-2">
            <BigButton lines={["Dwg", "Vergleich"]} w="w-[54px]">
              <svg viewBox="0 0 32 32" className="size-8" aria-hidden="true">
                <path d="M3 1h11l5 5v17H3z" fill="#2f68b8" /><path d="M14 11h11l5 5v16H14z" fill="#3f86e8" />
                <text x="5" y="17" fill="#fff" fontSize="11" fontWeight="bold" fontFamily="Liberation Sans">A</text>
                <text x="18" y="28" fill="#fff" fontSize="11" fontWeight="bold" fontFamily="Liberation Sans">B</text>
              </svg>
            </BigButton>
          </div>
          <h2 className="pt-px pl-[10px] text-[11px] leading-4 font-bold text-black">Vergleich</h2>
        </section>
      </div>
    </div>
  );
}

const CloseX = () => <svg viewBox="0 0 8 8" className="size-2"><path d="M.5.5l7 7M7.500.5l-7 7" stroke="#444" strokeWidth="1.200" /></svg>;

function DocTabs() {
  return (
    <div className="flex h-[17px] items-stretch text-[10px] text-[#222]">
      <div className="flex w-[66px] items-center justify-between pl-3 pr-[7px]"><button>Start</button><button aria-label="Start schließen"><CloseX /></button></div>
      <div className="flex w-20 items-center justify-between bg-[#eee] pl-[11px] pr-2 text-[11px] font-bold text-black"><button>Fasen*</button><button aria-label="Fasen schließen"><CloseX /></button></div>
      <button aria-label="Neue Zeichnung" className="flex w-[25px] items-center justify-center border-r border-neutral-200"><svg viewBox="0 0 9 9" className="size-[9px]"><path d="M4.500 0v9M0 4.500h9" stroke="#333" /></svg></button>
    </div>
  );
}

function Canvas() {
  return (
    <main className="relative min-h-[560px] flex-1 overflow-hidden border-t-2 border-r-2 border-[#858585] bg-white">
      <svg className="absolute top-0 left-0 h-full w-full" aria-label="Zeichnung">
        <g fill="none" stroke="#333" shapeRendering="crispEdges">
          <path d="M962 161.500H525.500v304h412M985.500 185v256" />
          <path d="M81.500 490v36M103 545.500h34" />
          <path d="M681.500 626v-6.500h8v6.500" />
        </g>
        <path d="M962 161.500l23.500 23.500M985.500 441l-48 24.500" stroke="#555" />
        <g fontFamily="Liberation Sans" fontSize="27" fill="#e8101c">
          <text x="389" y="92" textAnchor="end">Fasenabstand 10</text>
          <text x="389" y="125" textAnchor="end">Winkel 45</text>
          <text x="1140" y="101">Fasenabstand 5</text>
          <text x="1140" y="513">Fasenabstand 5</text>
          <text x="1140" y="546">Fasenabstand 10</text>
        </g>
        <g fill="none" stroke="#d83040">
          <path d="M397.500 83.500h40l36 36M1134 93.500h-39l-46 36M1134 504.500h-40l-66-24" />
        </g>
        <g fill="#e8000f">
          <path d="M486.500 132.500l-17-12 6.500-5.500zM1035 142.500l13-16 4.500 5.500zM1014 475.500l20.500 4-2 6.500z" />
        </g>
        <g fill="none" shapeRendering="crispEdges">
          <path d="M81 523.500h22M81 545.500h22" stroke="#f0909c" />
          <path d="M81.500 524v22M103.500 524v22" stroke="#40b090" />
        </g>
        <g fontFamily="Liberation Sans" fontSize="16">
          <text x="76" y="484" fill="#78c8b4">Y</text>
          <text x="144" y="551" fill="#f3a8b0">X</text>
          <text x="87" y="541" fill="#222">W</text>
        </g>
      </svg>
      <svg viewBox="-38 -38 76 76" className="absolute top-[9px] right-[9px] size-[76px]" aria-label="LookFrom">
        <circle r="36" fill="#fafafa" stroke="#dcdcdc" strokeWidth="1.500" />
        <g fill="#bbb">
          {[[0, -29.500], [21, -21], [29.500, 0], [21, 21], [0, 29.500], [-21, 21], [-29.500, 0], [-21, -21]].map(([x, y]) => <circle key={`${x},${y}`} cx={x} cy={y} r="1.800" />)}
        </g>
      </svg>
    </main>
  );
}

function LayoutTabs() {
  return (
    <div className="flex h-4 items-center border-t border-r-2 border-t-neutral-200 border-r-[#858585] pt-px text-[10px] font-['DejaVu_Sans_Condensed','DejaVu_Sans',sans-serif] text-[#333]">
      {[["Erstes", "M1.500 0v9M8 0v9L3 4.500z"], ["Vorheriges", "M7 0v9L2 4.500z"], ["Nächstes", "M2 0v9l5-4.500z"], ["Letztes", "M1 0v9l5-4.500zM7.500 0v9"], ["Liste", "M3.500.5h-2v6h2M5.500.5h2v6h-2"]].map(([l, d], i) => (
        <button key={l} aria-label={l} className="flex h-3.5 w-4 items-center justify-center border-r border-neutral-300">
          <svg viewBox="0 0 9 9" className="size-[9px]"><path d={d} fill={i === 4 ? "none" : "#000"} stroke={i === 4 ? "#444" : "#000"} strokeWidth="1" /></svg>
        </button>
      ))}
      <button className="ml-0.5 h-full bg-[#e8e8e8] px-[3px] font-bold text-black">Model</button>
      <button className="ml-[7px]">Layout1</button>
      <button className="ml-[13px]">Layout2</button>
      <button className="ml-[11px]" aria-label="Layout hinzufügen"><svg viewBox="0 0 7 7" className="size-[7px]"><path d="M3.500 0v7M0 3.500h7" stroke="#333" /></svg></button>
    </div>
  );
}

function CommandLine() {
  return (
    <section className="flex border-t-[3px] border-[#b0b0b0] bg-[#f0f0f0] pt-px font-['DejaVu_Sans_Mono',monospace] text-[11px]">
      <div className="flex w-2 flex-col items-center gap-[26px] pt-1.5">
        <button aria-label="Befehlszeile schließen"><svg viewBox="0 0 5 5" className="size-[5px]"><path d="M.5.5l4 4M4.500.5l-4 4" stroke="#777" /></svg></button>
        <Dots vertical />
      </div>
      <div className="flex min-w-0 flex-1 flex-col">
        <div className="flex h-[74px]">
          <div className="min-w-0 flex-1 overflow-hidden bg-[#828282] pt-[10px] pl-[5px] leading-[14px] whitespace-pre text-[#ececec]">
            <p>:</p>
            <p>: FASE</p>
            <p>Fase (Abstand1=5, Abstand2=10) Erstes Objekt wählen [fasen Einstellungen.../Polylinie/Winkel/ABstand/Methode/Stutzen/Zurück/MEHrere/auswahl-optionen (?)]:W</p>
            <p>Länge des ersten Objektes &lt;0&gt;: 10</p>
          </div>
          <div className="flex w-[15px] flex-col items-center bg-[#f0f0f0] py-1.5">
            <button aria-label="Nach oben"><svg viewBox="0 0 7 5" className="h-[5px] w-[7px]"><path d="M.5 4.500l3-3.500 3 3.500" fill="none" stroke="#444" strokeWidth="1.500" /></svg></button>
            <span className="flex-1" />
            <span className="mb-2 h-4 w-full bg-[#cdcdcd]" />
            <button aria-label="Nach unten"><svg viewBox="0 0 7 5" className="h-[5px] w-[7px]"><path d="M.5.5l3 3.500 3-3.500" fill="none" stroke="#444" strokeWidth="1.500" /></svg></button>
          </div>
        </div>
        <div className="relative flex h-[19px] items-center bg-[#353739] pl-px text-white">
          <label htmlFor="cmd" className="whitespace-pre">Winkel relativ zum ersten Objekt &lt;<span className="bg-[#a9b0b6] text-[#353739]">0</span>&gt;: </label>
          <input id="cmd" defaultValue="45" className="min-w-0 flex-1 bg-transparent outline-none" />
          <svg viewBox="0 0 5 15" className="absolute top-0.5 left-[594px] h-[15px] w-[5px]" aria-hidden="true"><path d="M0 .5h5M0 14.500h5M2.500 0v15" stroke="#ddd" /></svg>
        </div>
      </div>
    </section>
  );
}

const PROPS = [
  ["Allgemein", [["Farbe", "VonLayer", "swatch"], ["Layer", "Linien"], ["Linientyp", "VonLayer", "line"], ["Linientypfaktor", "1"], ["Linienstärke", "VonLayer", "line"], ["Transparenz", "VonLayer"], ["Erhebung", "0 m"]]],
  ["Ansicht", [["Kamera", "0, 0, 1", "plus"], ["Ziel", "0, 0, 0", "plus"], ["Perspektive", "Aus"], ["Brennweite", "50 mm"], ["Blickfeld", "38.58"], ["Höhe", "128 m", "dim"], ["Breite", "311.1927 m", "dim"], ["Zuschneiden", "Aus"], ["Vordere Ebene", "1 m"], ["Hintere Ebene", "0 m"], ["Visueller Stil", "2D Drahtmodell"]]],
  ["Gemischt", [["Beschriftungs Ska", "1:1"], ["Standard-Beleuch", "Aus"]]],
];
const Expander = ({ plus }) => (
  <button className="flex" aria-label={plus ? "Aufklappen" : "Zuklappen"}>
    <svg viewBox="0 0 9 9" className="size-[9px]"><path d="M.5.5h8v8h-8z" fill="#fff" stroke="#999" /><path d={plus ? "M2.500 4.500h4M4.500 2.500v4" : "M2.500 4.500h4"} stroke="#444" /></svg>
  </button>
);

function Properties() {
  return (
    <div className="flex min-w-0 flex-1 flex-col bg-white pt-1 font-['DejaVu_Sans_Condensed','DejaVu_Sans',sans-serif] text-[10px] text-[#222]">
      <div className="flex items-center pr-[3px] pl-[3px]">
        <Combo label="Auswahl" value="Keine Auswahl" className="h-[22px] flex-1 border-neutral-200" />
        <button aria-label="Schnellfilter" className="flex w-[23px] justify-center"><Ic n="filter" /></button>
        <button aria-label="Vorschau" aria-pressed="true" className="flex h-5 w-[22px] items-center justify-center border border-[#a9d0f5] bg-[#cce4f9]"><Ic n="eye" /></button>
      </div>
      <table className="mt-0.5 w-full table-fixed border-collapse">
        <colgroup><col className="w-[15px]" /><col className="w-[81px]" /><col /></colgroup>
        {PROPS.map(([group, rows]) => (
          <tbody key={group}>
            <tr className="h-[19px]">
              <td className="pl-[3px]"><Expander /></td>
              <th colSpan="2" className="bg-[#d4d4d4] pl-1 text-left text-[11px] leading-[15px] font-bold text-black">{group}</th>
            </tr>
            {rows.map(([k, v, kind]) => (
              <tr key={k} className="h-[17px] leading-[14px]">
                <td className="pl-[3px]">{kind === "plus" && <Expander plus />}</td>
                <th scope="row" className="overflow-hidden border-r border-b border-l border-[#ddd] pl-[3px] text-left font-normal whitespace-nowrap">{k}</th>
                <td className={`border-b border-[#ddd] pl-1 ${kind === "dim" ? "text-[#999]" : ""}`}>
                  <span className="flex items-center">
                    {kind === "swatch" && <span className="mr-1.5 ml-0.5 size-3 bg-[#333]" />}
                    {kind === "line" && <span className="mr-[5px] ml-[3px] h-px w-[85px] bg-[#333]" />}
                    {v}
                  </span>
                </td>
              </tr>
            ))}
          </tbody>
        ))}
      </table>
    </div>
  );
}

const SIDE = [
  ["Tipps", <><path d="M8.500 17c0-4-4.500-5-4.500-9.500a7.500 7.500 0 0 1 15 0c0 4.500-4.500 5.500-4.500 9.500z" /><path d="M8.500 18.500h6v2l-1.500 2h-3l-1.500-2z" fill="#aaa" /></>],
  ["Eigenschaften", <><path d="M0 4h5M9 4h14M0 11.500h15.500M19.500 11.500H23M0 19h9M13 19h10" /><circle cx="7" cy="4" r="2" /><circle cx="17.500" cy="11.500" r="2" /><circle cx="11" cy="19" r="2" /></>],
  ["Layer", <><path d="M11.500 1L22.500 7l-11 6-11-6z" /><path d="M.5 11.500l11 6 11-6M.5 16l11 6 11-6" /></>],
  ["Anhänge", <path d="M9 8v9.500a2.200 2.200 0 0 0 4.500 0V5.500a4 4 0 0 0-8 0v12c0 7 11 7 11 0V8" />],
  ["Schraffur", <><path d="M.5.5v22h22z" /><path d="M5 11.500v6.500h6.500z" /><path d="M.5.5h22v22M8 .5v7M13 .5v12M18 .5v17M5 5.500h17.500M10 10.500h12.500M15 15.500h7.500" /></>],
  ["Parameter", null],
  ["Struktur", <path d="M.5 1.500h11v4H.5zM6.500 5.500v13h5M6.500 11.500h5M11.500 9.500h11v4h-11zM11.500 16.500h11v5h-11z" />],
  ["Cloud", <><path d="M5 19a4.500 4.500 0 0 1-.5-9 7 7 0 0 1 13.500-1.500A5.300 5.300 0 0 1 18 19z" /><path d="M11.500 16.500v-6M9 13l2.500-2.500L14 13" strokeWidth="1.500" /></>],
  ["Bauteile", <path d="M2.500 1.500h7v7h-7zM13.500 1.500h7v7h-7zM2.500 14.500h7v7h-7zM13.500 14.500h7v7h-7zM1 11.500h9M13 11.500h9" />],
];

function SideBar() {
  return (
    <nav className="flex w-[46px] shrink-0 flex-col bg-[#eee]">
      {SIDE.map(([l, art], i) => (
        <button key={l} aria-label={l} className={`flex h-12 items-center justify-center ${i === 1 ? "bg-white" : ""}`}>
          {art ? <svg viewBox="0 0 23 23" className="size-[23px]" fill="none" stroke="#888" aria-hidden="true">{art}</svg>
            : <span className="flex items-baseline font-['Liberation_Serif',serif] text-[#777] italic"><span className="text-xl font-bold">f</span><span className="text-[15px]">(x)</span></span>}
        </button>
      ))}
    </nav>
  );
}

const STATUS = [
  ["Standard", "w-[50px]"], ["ISO-25", "w-[41px]"], ["Konstruieren", "w-[69px]"],
  ["FANG", "w-[37px]", 0], ["RASTER", "w-[47px]", 0], ["ORTHO", "w-[43px]", 0], ["POLAR", "w-[40px]", 0],
  ["OFANG", "w-[43px]", 1], ["OTRACK", "w-[47px]", 1], ["LST", "w-[24px]", 0], ["MODELL", "w-[47px]"], ["1:1", "w-[23px]"],
  ["DBKS", "w-[32px]", 0], ["DYN", "w-[28px]", 1], ["QUAD", "w-[37px]", 0], ["RT", "w-[21px]", 0], ["HKA", "w-[27px]", 0], ["UISPERREN", "w-[63px]", 0],
];

function StatusBar() {
  return (
    <footer className="flex h-[18px] items-center bg-white pt-px font-['DejaVu_Sans_Condensed','DejaVu_Sans',sans-serif] text-[10px] text-[#333]">
      <span className="flex-1 pl-0.5 text-[#555]">Bereit</span>
      <span className="w-[174px] border-l border-neutral-200 pr-1 text-right">90.6468, 167.5872, 0</span>
      {STATUS.map(([t, w, s]) => (
        <span key={t} className={`flex shrink-0 justify-center border-l border-neutral-200 ${w}`}>
          <button className={s === 0 ? "text-[#c4c4c4]" : s === 1 ? "bg-[#d0d0d0] px-px" : ""}>{t}</button>
        </span>
      ))}
      <button className="flex w-[54px] items-center justify-between border-l border-neutral-200 pr-2 pl-1">Keine<Tri /></button>
      <svg viewBox="0 0 8 8" className="ml-7 mr-0.5 size-2 self-end" aria-hidden="true"><path d="M6 0h2v2H6zM6 3h2v2H6zM6 6h2v2H6zM3 3h2v2H3zM3 6h2v2H3zM0 6h2v2H0z" fill="#bbb" /></svg>
    </footer>
  );
}

export default function App() {
  return (
    <div className="flex min-h-screen bg-black px-[37px] pb-[35px] font-['Open_Sans','Noto_Sans',sans-serif]">
      <div className="flex min-w-0 flex-1 flex-col border-b-4 border-[#3c3c3c] bg-[#fefefe] text-[#222]">
        <TitleBar />
        <MenuBar />
        <Toolbars />
        <Ribbon />
        <div className="flex flex-1">
          <div className="flex min-w-0 flex-1 flex-col">
            <DocTabs />
            <Canvas />
            <LayoutTabs />
            <CommandLine />
          </div>
          <aside className="flex w-[316px] shrink-0 flex-col border-l-2 border-[#eee]">
            <div className="flex h-2 items-center bg-[#eee] pl-[142px]"><Dots /></div>
            <div className="flex flex-1"><Properties /><SideBar /></div>
          </aside>
        </div>
        <StatusBar />
      </div>
    </div>
  );
}
